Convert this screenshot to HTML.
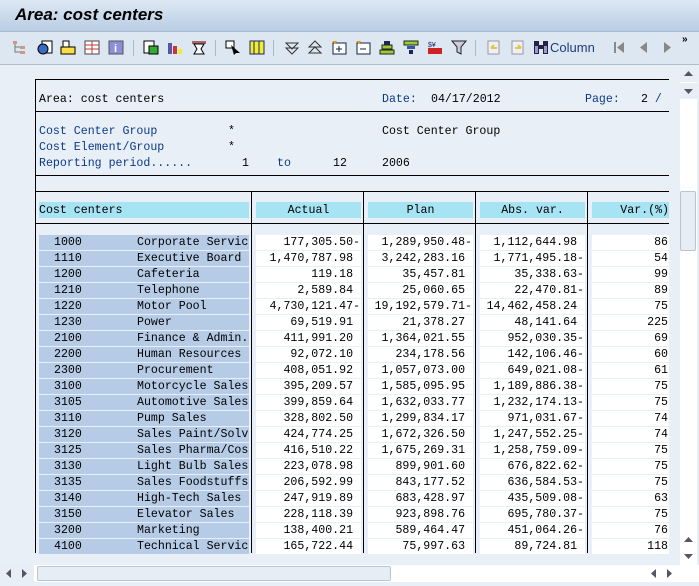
<!DOCTYPE html>
<html><head><meta charset="utf-8"><style>
*{margin:0;padding:0;box-sizing:border-box}
body{width:699px;height:582px;overflow:hidden;background:#e8eff7;font-family:"Liberation Mono",monospace;font-size:11.6px;position:relative}
.a{position:absolute;white-space:pre}
#title{left:0;top:0;width:699px;height:32px;background:linear-gradient(#dde8f3,#b9cde3);border-bottom:1px solid #a9bbd0}
#title span{position:absolute;left:15px;top:5px;font:italic bold 17px "Liberation Sans",sans-serif;color:#000}
#tb{left:0;top:32px;width:699px;height:33px;background:#dde7f1;border-bottom:1px solid #aebdcc}
.ic{position:absolute;top:40px;width:16px;height:15px}
.sep{position:absolute;top:40px;width:1px;height:16px;background:#aab9cc}
.hl{position:absolute;height:1px;background:#000}
.vl{position:absolute;width:1px;background:#000}
.blue{color:#0b3a85}
.hd{position:absolute;top:202px;height:16px;background:#a6e3f3;line-height:17px;text-align:center}
.row{position:absolute;height:15px;line-height:16px}
.k{left:39px;width:210px;background:#b6cbe6}
.n{background:#fff;text-align:right;padding-right:1px}
.sb{position:absolute;background:#fff}
</style></head><body>
<div id="title" class="a"><span>Area: cost centers</span></div>
<div id="tb" class="a"></div>
<div class="ic" style="left:12px"><svg width="16" height="15"><rect x="1" y="1" width="4" height="3" fill="#c98"/><rect x="8" y="6" width="5" height="3" fill="#c98"/><rect x="8" y="11" width="5" height="3" fill="#c98"/><path d="M3 4v8h5M3 7h5" stroke="#777" fill="none"/></svg></div>
<div class="ic" style="left:37px"><svg width="16" height="15"><rect x="5" y="1" width="10" height="12" fill="#fff" stroke="#000"/><circle cx="6" cy="9" r="5" fill="#3a6bc4" stroke="#000"/></svg></div>
<div class="ic" style="left:60px"><svg width="16" height="15"><rect x="3" y="1" width="6" height="6" fill="#fff" stroke="#000"/><rect x="1" y="7" width="14" height="7" fill="#fd4" stroke="#000"/></svg></div>
<div class="ic" style="left:84px"><svg width="16" height="15"><rect x="1" y="1" width="14" height="13" fill="#fff" stroke="#444"/><path d="M1 5h14M1 9h14M8 1v13" stroke="#c33"/></svg></div>
<div class="ic" style="left:108px"><svg width="16" height="15"><rect x="1" y="1" width="14" height="13" fill="#8a8fd8" stroke="#555"/><text x="6" y="12" font-size="11" font-weight="bold" fill="#fff" font-family="Liberation Sans">i</text></svg></div>
<div class="sep" style="left:133px"></div>
<div class="ic" style="left:143px"><svg width="16" height="15"><rect x="1" y="1" width="10" height="12" fill="#fff" stroke="#000"/><rect x="6" y="6" width="9" height="8" fill="#3a3" stroke="#000"/></svg></div>
<div class="ic" style="left:167px"><svg width="16" height="15"><rect x="1" y="3" width="4" height="11" fill="#55a" /><rect x="6" y="6" width="4" height="8" fill="#c33"/><rect x="11" y="9" width="4" height="5" fill="#ee3"/></svg></div>
<div class="ic" style="left:191px"><svg width="16" height="15"><rect x="1" y="1" width="14" height="3" fill="#a66"/><path d="M3 4h10l-3 5 3 5H3l3-5z" fill="#fff" stroke="#000"/></svg></div>
<div class="sep" style="left:215px"></div>
<div class="ic" style="left:225px"><svg width="16" height="15"><rect x="1" y="1" width="8" height="7" fill="#fff" stroke="#000"/><path d="M6 5l9 8-4 0-2 2z" fill="#000"/></svg></div>
<div class="ic" style="left:249px"><svg width="16" height="15"><rect x="1" y="1" width="14" height="13" fill="#ee3" stroke="#226"/><path d="M5 1v13M10 1v13" stroke="#226"/></svg></div>
<div class="sep" style="left:273px"></div>
<div class="ic" style="left:284px"><svg width="16" height="15"><path d="M2 3h12l-6 6zM2 8h12l-6 6z" fill="none" stroke="#333"/></svg></div>
<div class="ic" style="left:307px"><svg width="16" height="15"><path d="M2 7l6-6 6 6zM2 13l6-6 6 6z" fill="none" stroke="#333"/><path d="M2 13h12" stroke="#333"/></svg></div>
<div class="ic" style="left:331px"><svg width="16" height="15"><rect x="2" y="3" width="13" height="11" fill="#fff" stroke="#124"/><path d="M8 6v6M5 9h6" stroke="#124"/><path d="M1 1h5l-2 3z" fill="#e90"/></svg></div>
<div class="ic" style="left:355px"><svg width="16" height="15"><rect x="2" y="3" width="13" height="11" fill="#fff" stroke="#124"/><path d="M5 9h6" stroke="#124"/><path d="M1 1h5l-2 3z" fill="#e90"/></svg></div>
<div class="ic" style="left:379px"><svg width="16" height="15"><rect x="5" y="1" width="6" height="4" fill="#225"/><rect x="3" y="5" width="10" height="4" fill="#9c3" stroke="#222"/><rect x="1" y="10" width="14" height="4" fill="#9c3" stroke="#222"/></svg></div>
<div class="ic" style="left:403px"><svg width="16" height="15"><rect x="1" y="1" width="14" height="4" fill="#9c3" stroke="#222"/><rect x="4" y="6" width="8" height="3" fill="#35a"/><rect x="6" y="10" width="4" height="4" fill="#225"/></svg></div>
<div class="ic" style="left:427px"><svg width="16" height="15"><text x="1" y="7" font-size="7" fill="#226" font-family="Liberation Sans">$¥</text><rect x="1" y="8" width="14" height="6" fill="#c22"/></svg></div>
<div class="ic" style="left:451px"><svg width="16" height="15"><path d="M1 1h14l-5 6v7l-4-2V7z" fill="#ccd" stroke="#222"/></svg></div>
<div class="sep" style="left:475px"></div>
<div class="ic" style="left:486px"><svg width="16" height="15"><rect x="2" y="1" width="11" height="13" fill="#eef" stroke="#999"/><path d="M5 8h6M5 8l3-3" stroke="#dc3" stroke-width="2"/></svg></div>
<div class="ic" style="left:510px"><svg width="16" height="15"><rect x="2" y="1" width="11" height="13" fill="#eef" stroke="#999"/><path d="M5 8h6M11 8l-3-3" stroke="#dc3" stroke-width="2"/></svg></div>
<div class="ic" style="left:533px"><svg width="16" height="15"><rect x="1" y="1" width="5" height="13" fill="#224"/><rect x="10" y="1" width="5" height="13" fill="#224"/><rect x="5" y="5" width="6" height="4" fill="#224"/><rect x="2" y="6" width="3" height="7" fill="#99c"/><rect x="11" y="6" width="3" height="7" fill="#99c"/></svg></div>
<div class="a" style="left:550px;top:40px;font:13px 'Liberation Sans',sans-serif;color:#1d3c78">Column</div>
<div class="ic" style="left:612px"><svg width="16" height="15"><rect x="2" y="2" width="2" height="11" fill="#888"/><path d="M12 2v11l-7-5.5z" fill="#888"/></svg></div>
<div class="ic" style="left:636px"><svg width="16" height="15"><path d="M11 2v11l-7-5.5z" fill="#888"/></svg></div>
<div class="ic" style="left:659px"><svg width="16" height="15"><path d="M5 2v11l7-5.5z" fill="#888"/></svg></div>
<div class="a" style="left:682px;top:34px;font:bold 10px 'Liberation Sans',sans-serif">»</div>

<div class="hl" style="left:35px;top:79px;width:634px"></div>
<div class="hl" style="left:35px;top:111px;width:634px"></div>
<div class="hl" style="left:35px;top:175px;width:634px"></div>
<div class="hl" style="left:35px;top:191px;width:634px"></div>
<div class="hl" style="left:35px;top:223px;width:634px"></div>
<div class="vl" style="left:35px;top:79px;height:474px"></div>
<div class="vl" style="left:251px;top:191px;height:362px"></div>
<div class="vl" style="left:363px;top:191px;height:362px"></div>
<div class="vl" style="left:475px;top:191px;height:362px"></div>
<div class="vl" style="left:587px;top:191px;height:362px"></div>

<div class="a" style="left:39px;top:93px">Area: cost centers</div>
<div class="a blue" style="left:382px;top:93px">Date:</div>
<div class="a" style="left:431px;top:93px">04/17/2012</div>
<div class="a blue" style="left:585px;top:93px">Page:</div>
<div class="a" style="left:641px;top:93px">2 <span class="blue">/</span></div>

<div class="a blue" style="left:39px;top:125px">Cost Center Group</div>
<div class="a" style="left:228px;top:125px">*</div>
<div class="a" style="left:382px;top:125px">Cost Center Group</div>
<div class="a blue" style="left:39px;top:141px">Cost Element/Group</div>
<div class="a" style="left:228px;top:141px">*</div>
<div class="a blue" style="left:39px;top:157px">Reporting period......</div>
<div class="a" style="left:242px;top:157px">1</div>
<div class="a blue" style="left:277px;top:157px">to</div>
<div class="a" style="left:333px;top:157px">12</div>
<div class="a" style="left:382px;top:157px">2006</div>

<div class="hd" style="left:39px;width:210px;text-align:left">Cost centers</div>
<div class="hd" style="left:256px;width:105px">Actual</div>
<div class="hd" style="left:368px;width:105px">Plan</div>
<div class="hd" style="left:480px;width:105px">Abs. var.</div>
<div class="hd" style="left:592px;width:77px;text-align:right">Var.(%)</div>

<div id="rows"></div>
<script>
var d=[["1000","Corporate Servic","177,305.50-","1,289,950.48-","1,112,644.98","86"],
["1110","Executive Board","1,470,787.98","3,242,283.16","1,771,495.18-","54"],
["1200","Cafeteria","119.18","35,457.81","35,338.63-","99"],
["1210","Telephone","2,589.84","25,060.65","22,470.81-","89"],
["1220","Motor Pool","4,730,121.47-","19,192,579.71-","14,462,458.24","75"],
["1230","Power","69,519.91","21,378.27","48,141.64","225"],
["2100","Finance & Admin.","411,991.20","1,364,021.55","952,030.35-","69"],
["2200","Human Resources","92,072.10","234,178.56","142,106.46-","60"],
["2300","Procurement","408,051.92","1,057,073.00","649,021.08-","61"],
["3100","Motorcycle Sales","395,209.57","1,585,095.95","1,189,886.38-","75"],
["3105","Automotive Sales","399,859.64","1,632,033.77","1,232,174.13-","75"],
["3110","Pump Sales","328,802.50","1,299,834.17","971,031.67-","74"],
["3120","Sales Paint/Solv","424,774.25","1,672,326.50","1,247,552.25-","74"],
["3125","Sales Pharma/Cos","416,510.22","1,675,269.31","1,258,759.09-","75"],
["3130","Light Bulb Sales","223,078.98","899,901.60","676,822.62-","75"],
["3135","Sales Foodstuffs","206,592.99","843,177.52","636,584.53-","75"],
["3140","High-Tech Sales","247,919.89","683,428.97","435,509.08-","63"],
["3150","Elevator Sales","228,118.39","923,898.76","695,780.37-","75"],
["3200","Marketing","138,400.21","589,464.47","451,064.26-","76"],
["4100","Technical Servic","165,722.44","75,997.63","89,724.81","118"]];
var h="";
d.forEach(function(r,i){var t=235+i*16;
function f(s){return s.slice(-1)=="-"?s:s+" "}
h+='<div class="row k" style="top:'+t+'px"><span class="a" style="left:15px">'+r[0]+'</span><span class="a" style="left:98px">'+r[1]+'</span></div>';
h+='<div class="row n" style="top:'+t+'px;left:256px;width:105px;white-space:pre">'+f(r[2])+'</div>';
h+='<div class="row n" style="top:'+t+'px;left:368px;width:105px;white-space:pre">'+f(r[3])+'</div>';
h+='<div class="row n" style="top:'+t+'px;left:480px;width:105px;white-space:pre">'+f(r[4])+'</div>';
h+='<div class="row n" style="top:'+t+'px;left:592px;width:77px">'+r[5]+'</div>';});
document.getElementById("rows").innerHTML=h;
</script>

<div class="sb" style="left:680px;top:66px;width:17px;height:500px;background:#fff"></div>
<div class="a" style="left:680px;top:66px;width:17px;height:16px;background:#e8eef6"><svg width="17" height="16"><path d="M4 10h9l-4.5-5z" fill="#556"/></svg></div>
<div class="a" style="left:680px;top:83px;width:17px;height:16px;background:#e8eef6"><svg width="17" height="16"><path d="M4 6h9l-4.5 5z" fill="#556"/></svg></div>
<div class="a" style="left:680px;top:191px;width:16px;height:60px;background:#e6edf5;border:1px solid #b7c4d3;border-radius:2px"></div>
<div class="a" style="left:680px;top:532px;width:17px;height:16px"><svg width="17" height="16"><path d="M4 10h9l-4.5-5z" fill="#556"/></svg></div>
<div class="a" style="left:680px;top:548px;width:17px;height:16px"><svg width="17" height="16"><path d="M4 6h9l-4.5 5z" fill="#556"/></svg></div>
<div class="a" style="left:0;top:565px;width:699px;height:17px;background:#fff"></div>
<div class="a" style="left:0;top:565px;width:34px;height:17px;background:#e8eef6"><svg width="34" height="17"><path d="M11 4v9l-5-4.5zM22 4v9l5-4.5z" fill="#556"/></svg></div>
<div class="a" style="left:37px;top:566px;width:354px;height:15px;background:#e6edf5;border:1px solid #b7c4d3;border-radius:2px"></div>
<div class="a" style="left:645px;top:565px;width:34px;height:17px"><svg width="34" height="17"><path d="M11 4v9l-5-4.5zM22 4v9l5-4.5z" fill="#556"/></svg></div>
</body></html>
